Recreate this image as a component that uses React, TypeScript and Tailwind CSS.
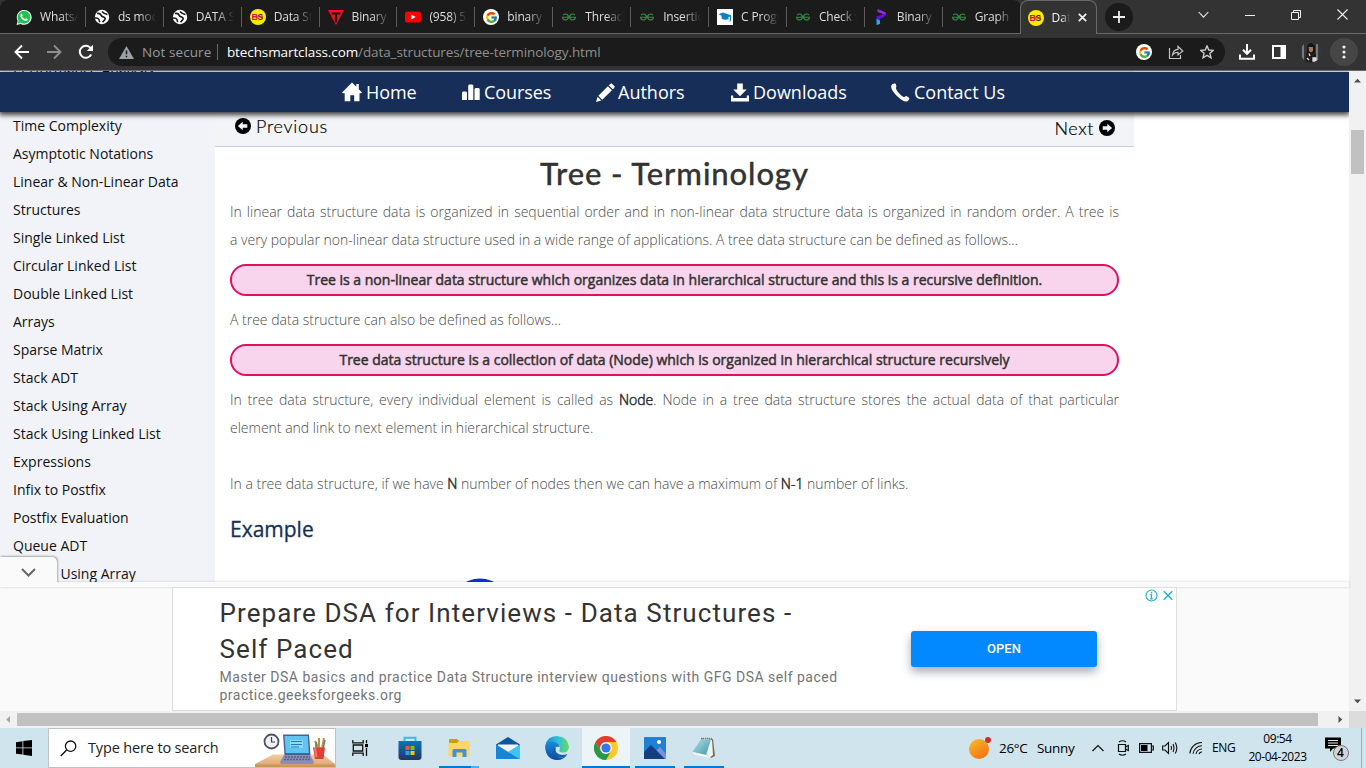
import React from "react";
import { FcGoogle } from "react-icons/fc";
import { SiGeeksforgeeks } from "react-icons/si";
import { FaWhatsapp } from "react-icons/fa";

const GlobeIcon = () => (
  <svg width="16" height="16" viewBox="0 0 16 16">
    <circle cx="8" cy="8" r="7.2" fill="#fff" />
    <path d="M3 4.5 Q6 4 7 6 Q7.5 8 10 8.2 Q12 9 10.5 11 L8.5 13.2" fill="none" stroke="#1b1b1b" strokeWidth="1.7" />
    <path d="M8 2.5 Q10 5 13.5 5.5 M1 9 Q4 8.5 5 10.5 Q5 12 6 13" fill="none" stroke="#1b1b1b" strokeWidth="1.5" />
  </svg>
);

const BsIcon = () => (
  <svg width="16" height="16" viewBox="0 0 16 16">
    <circle cx="8" cy="8" r="8" fill="#ffea00" />
    <text x="1.6" y="11.2" fontSize="9" fontWeight="800" fontFamily="Liberation Sans, sans-serif" fill="#e0104c">B</text>
    <text x="7.6" y="11" fontSize="8.5" fontWeight="800" fontFamily="Liberation Sans, sans-serif" fill="#3a2a20">S</text>
    <path d="M2 7.9H13" stroke="#e0104c" strokeWidth="1" />
  </svg>
);

const WhatsIcon = () => (
  <svg width="17" height="17" viewBox="0 0 17 17">
    <path d="M.6 16.4 1.8 12.2A7.9 7.9 0 1 1 5 15.3Z" fill="#fff" />
    <path d="M1.9 15.1 2.8 12A6.8 6.8 0 1 1 5.2 14.2Z" fill="#1fc151" />
    <path d="M5.3 4.6 6.3 4.5 7.2 6.5 6.5 7.5Q7.5 9.5 9.6 10.3L10.5 9.3 12.6 10.3Q12.4 12.3 10.3 12.2 5.8 11.3 4.7 7.2 4.4 5.5 5.3 4.6Z" fill="#fff" />
  </svg>
);

const TIcon = () => (
  <svg width="16" height="16" viewBox="0 0 16 16">
    <path d="M0 1H16L8 16Z" fill="#f3121d" />
    <path d="M3.6 3.4H12.4V5.6H9.2V12L8 14 6.8 12V5.6H3.6Z" fill="#1b1b1b" />
  </svg>
);

const YouTubeIcon = () => (
  <svg width="16" height="16" viewBox="0 0 16 16">
    <rect y="2.4" width="16" height="11.2" rx="2.6" fill="#ff0000" />
    <path d="M6.3 5.5V10.5L10.6 8Z" fill="#fff" />
  </svg>
);

const GoogleIcon = () => (
  <span className="flex size-4 items-center justify-center rounded-full bg-white">
    <FcGoogle size={13} />
  </span>
);

const GfgIcon = () => <SiGeeksforgeeks size={14} color="#2f8d46" />;

const CapIcon = () => (
  <svg width="16" height="16" viewBox="0 0 16 16">
    <rect width="16" height="16" fill="#fff" />
    <path d="M1.5 5.2 6 3.4 14 6.2V11.5L12.8 13V7.6L11.5 8V10.2Q7.5 11.4 4.6 9.4V6.8Z" fill="#0c80c0" />
  </svg>
);

const PIcon = () => (
  <svg width="14" height="16" viewBox="0 0 14 16">
    <path d="M3.5 0 11.5 3.2Q13 5 11 6.8L7.5 9V6L9 5 3.5 3Z" fill="#a020f0" />
    <path d="M11.5 4.2Q12 7 8.5 8.6L5.8 9.8V13L2.5 11V7.5L7.5 6Z" fill="#5b14e0" />
    <path d="M2.5 10 6 11.5V15L2.5 16Z" fill="#2aa5f2" />
  </svg>
);

const tabs: [React.FC, string][] = [
  [WhatsIcon, "WhatsApp"],
  [GlobeIcon, "ds module"],
  [GlobeIcon, "DATA STR"],
  [BsIcon, "Data Struct"],
  [TIcon, "Binary Se"],
  [YouTubeIcon, "(958) 5.1"],
  [GoogleIcon, "binary tre"],
  [GfgIcon, "Threaded"],
  [GfgIcon, "Insertion"],
  [CapIcon, "C Program"],
  [GfgIcon, "Check wh"],
  [PIcon, "Binary Se"],
  [GfgIcon, "Graph Re"],
];

const TabStrip = () => (
  <div className="flex h-[33px] bg-[#333333]">
    <div className="flex h-[33px] rounded-t-lg bg-[#1b1b1b] pl-2">
      {tabs.map(([Icon, label], i) => (
        <div key={i} className="flex h-[33px] w-[77.9px] items-center">
          <div className="flex h-full w-[77px] items-center overflow-hidden pt-px pl-2">
            <span className="flex w-4 shrink-0 justify-center"><Icon /></span>
            <span className="ml-2 w-[38px] overflow-hidden whitespace-nowrap text-[12px] tracking-[-0.15px] text-[#dedede] [mask-image:linear-gradient(to_right,#000_55%,transparent)]">
              {label}
            </span>
          </div>
          <div className={i === 12 ? "hidden" : "h-5 w-px bg-[#5c5c5c]"} />
        </div>
      ))}
    </div>
    <div className="z-10 -ml-px flex h-[34px] w-[77px] items-center rounded-t-lg border border-b-0 border-[#6a6a6a] bg-[#333333] pl-[7px]">
      <BsIcon />
      <span className="ml-2 w-[18px] overflow-hidden whitespace-nowrap text-[12px] text-[#f0f0f0] [mask-image:linear-gradient(to_right,#000_55%,transparent)]">Data</span>
      <svg className="ml-2" width="9" height="9" viewBox="0 0 9 9"><path d="M.8.8 8.2 8.2M8.2.8.8 8.2" stroke="#eee" strokeWidth="1.8" /></svg>
    </div>
    <div className="mt-[3px] ml-2 flex size-7 items-center justify-center rounded-full bg-[#1b1b1b]">
      <svg width="12" height="12" viewBox="0 0 12 12"><path d="M6 0V12M0 6H12" stroke="#eee" strokeWidth="1.8" /></svg>
    </div>
    <div className="ml-auto flex h-[29px] items-center pr-[18px] text-[#eee]">
      <svg className="mr-9" width="11" height="8" viewBox="0 0 11 8"><path d="M.7 1 5.5 6.2 10.3 1" fill="none" stroke="currentColor" strokeWidth="1.1" /></svg>
      <svg className="mr-9" width="10" height="10" viewBox="0 0 10 10"><path d="M0 5.5H10" stroke="currentColor" /></svg>
      <svg className="mr-9" width="10" height="10" viewBox="0 0 10 10"><path d="M.5 2.5H7.5V9.5H.5ZM2.5 2.5V.5H9.5V7.5H7.5" fill="none" stroke="currentColor" /></svg>
      <svg width="11" height="11" viewBox="0 0 11 11"><path d="M.5.5 10.5 10.5M10.5.5.5 10.5" stroke="currentColor" strokeWidth="1.1" /></svg>
    </div>
  </div>
);

const Toolbar = () => (
  <div className="flex h-[38px] items-center border-t border-b border-[#696969] bg-[#333333] pr-2 pl-[14px]">
    <svg width="16" height="16" viewBox="0 0 16 16"><path d="M15 8H2M8 1.5 1.5 8 8 14.5" fill="none" stroke="#fff" strokeWidth="1.9" /></svg>
    <svg className="ml-4" width="16" height="16" viewBox="0 0 16 16"><path d="M1 8H14M8 1.5 14.5 8 8 14.5" fill="none" stroke="#8d8d8d" strokeWidth="1.9" /></svg>
    <svg className="ml-4" width="16" height="16" viewBox="0 0 16 16"><path d="M13.2 10.5A6 6 0 1 1 12.6 4.2" fill="none" stroke="#fff" strokeWidth="2" /><path d="M15 .8V7H8.8Z" fill="#fff" /></svg>
    <div className="ml-[14px] flex h-7 w-[1118px] items-center rounded-full bg-[#1b1b1b] pl-[11px]">
      <svg width="15" height="13" viewBox="0 0 15 13"><path d="M7.5 0 15 13H0Z" fill="#9aa0a6" /><path d="M7.5 4.6V8.3M7.5 9.7V11.3" stroke="#1b1b1b" strokeWidth="1.5" /></svg>
      <span className="ml-2 w-[67px] whitespace-nowrap text-[13.5px] tracking-[0.1px] text-[#959a9f]">Not secure</span>
      <span className="ml-2 h-4 w-px bg-[#6a6a6a]" />
      <span className="ml-[9px] whitespace-nowrap text-[13.5px] tracking-[-0.1px] text-[#8f8f8f]"><span className="text-white">btechsmartclass.com</span>/data_structures/tree-terminology.html</span>
      <span className="mr-4 ml-auto"><GoogleIcon /></span>
      <svg className="mr-4" width="16" height="16" viewBox="0 0 16 16"><path d="M1.5 4V14.5H12.5V11M4.5 11Q5 5.8 10 5.3V2.5L14.8 7 10 11V8.3Q6.5 8.2 4.5 11Z" fill="none" stroke="#c4c4c4" strokeWidth="1.2" /></svg>
      <svg className="mr-[11px]" width="14" height="14" viewBox="0 0 14 14"><path d="M7 .9 8.8 5 13.3 5.4 9.9 8.3 11 12.8 7 10.4 3 12.8 4.1 8.3.7 5.4 5.2 5Z" fill="none" stroke="#c9c9c9" strokeWidth="1.4" /></svg>
    </div>
    <svg className="ml-[14px]" width="16" height="16" viewBox="0 0 16 16"><path d="M8 0V9M4 5.8 8 9.8 12 5.8M1 10.5V14.8H15V10.5" fill="none" stroke="#fff" strokeWidth="2" /></svg>
    <svg className="ml-[17px]" width="14" height="14" viewBox="0 0 14 14"><path d="M1 1H13V13H1Z" fill="none" stroke="#fff" strokeWidth="2" /><path d="M8.5 1H13V13H8.5Z" fill="#fff" /></svg>
    <svg className="ml-[14px]" width="22" height="22" viewBox="0 0 22 22">
      <clipPath id="face"><circle cx="11" cy="11" r="10.5" /></clipPath>
      <g clipPath="url(#face)">
        <rect width="22" height="22" fill="#33373b" />
        <path d="M3 2V19M17 3V20" stroke="#929ca3" strokeWidth="1.4" />
        <path d="M7 5Q11-1 15 5V12H7Z" fill="#171514" />
        <path d="M8.5 6H13V10L11 12 9 10Z" fill="#a8755c" />
        <path d="M6 12 11 11 16 13 16 22H5Z" fill="#201c1b" />
        <path d="M9 12.5 10 15M13 17H16V20H13ZM7 17 9 19" stroke="#ddd" strokeWidth="1.3" fill="#ddd" />
      </g>
    </svg>
    <div className="ml-2 flex size-7 shrink-0 items-center justify-center rounded-full bg-[#464646]">
      <svg width="4" height="14" viewBox="0 0 4 14" fill="#eee"><circle cx="2" cy="2" r="1.6" /><circle cx="2" cy="7" r="1.6" /><circle cx="2" cy="12" r="1.6" /></svg>
    </div>
  </div>
);

const topics = [
  "Performance Analysis", "Space Complexity", "Time Complexity", "Asymptotic Notations", "Linear & Non-Linear Data", "Structures",
  "Single Linked List", "Circular Linked List", "Double Linked List", "Arrays", "Sparse Matrix", "Stack ADT",
  "Stack Using Array", "Stack Using Linked List", "Expressions", "Infix to Postfix", "Postfix Evaluation", "Queue ADT", "Queue Using Array",
];

const SiteNav = () => (
  <nav className="absolute inset-x-0 top-px flex h-10 items-center bg-[#172f58] pl-[342px] text-[18px] leading-none whitespace-nowrap text-white shadow-[0_2px_5px_1px_rgba(0,0,0,0.75)]">
    <div className="flex w-[120px] items-center">
      <svg width="20" height="20" viewBox="0 0 20 20" fill="#fff"><path d="M10 .4 14.3 4.7V2H16.8V7.2L20 10.4 19.2 11.2H17.5V19.2H12.2V13.2H8.3V19.2H2.7V11.2H.8L0 10.4Z" /></svg>
      <span className="ml-1 tracking-[-0.1px]">Home</span>
    </div>
    <div className="flex w-[134px] items-center">
      <svg width="18" height="18" viewBox="0 0 18 18" fill="#fff"><path d="M0 9.5 1 8.5H4L5 9.5V17H0ZM6.2 2.5 7.2 1.5H10.3L11.3 2.5V17H6.2ZM12.5 6 13.5 5H16.7L17.7 6V17H12.5Z" /></svg>
      <span className="ml-1 tracking-[-0.1px]">Courses</span>
    </div>
    <div className="flex w-[135px] items-center">
      <svg width="19" height="19" viewBox="0 0 19 19" fill="#fff"><path d="M14 1.2 15.5.3 18.8 3.5 18 5.2 16.8 6.3 12.8 2.3ZM11.9 3.2 15.9 7.2 6.3 16.7 2.4 12.7ZM1.6 13.8 5.3 17.4 0 19Z" /></svg>
      <span className="ml-[3px]">Authors</span>
    </div>
    <div className="flex w-[160px] items-center">
      <svg width="18" height="19" viewBox="0 0 18 19" fill="#fff"><path d="M6.2.5H11.8V6.5H15.7L9 13.2 2.3 6.5H6.2ZM0 12.5H2.2V15H15.8V12.5H18V18.5H0Z" /></svg>
      <span className="ml-1">Downloads</span>
    </div>
    <div className="flex items-center">
      <svg width="19" height="19" viewBox="0 0 19 19" fill="#fff"><path d="M1.2 1.2 4 .3Q5 .7 5.4 3.4L4.8 5.2Q5.5 7.5 8 10.2 10.5 13 13 14.3L15 13.1Q17.7 14 18.5 15.5L17 18Q13.5 20 6.5 13.5-.8 6.2.3 2.7Z" /></svg>
      <span className="ml-1">Contact Us</span>
    </div>
  </nav>
);

const Arrow = ({ left = false }: { left?: boolean }) => (
  <svg className={left ? "" : "rotate-180"} width="16" height="16" viewBox="0 0 16 16">
    <circle cx="8" cy="8" r="8" />
    <path d="M2.9 8 7.7 3.8V6.3H12.3V9.7H7.7V12.2Z" fill="#f2f4f6" />
  </svg>
);

const B = ({ children }: { children: React.ReactNode }) => (
  <span className="text-[#333] [-webkit-text-stroke:0.5px_#333]">{children}</span>
);

const Definition = ({ children }: { children: React.ReactNode }) => (
  <div className="flex h-8 items-center justify-center rounded-2xl border-2 border-[#e0105c] bg-[#f9d5ed] whitespace-nowrap">{children}</div>
);

const Article = () => (
  <main className="h-full w-[919px] text-[14px] leading-7 text-[#4c4c4c]">
    <div className="flex h-[76px] items-end justify-between border-b border-[#c9cbd9] bg-[#f3f4f7] px-[15px] font-['Lato'] text-[18px] text-black">
      <div className="mb-[6px] ml-[5px] flex items-center gap-[5px]"><Arrow left /><span className="font-light tracking-[0.75px] [-webkit-text-stroke:0.2px_black]">Previous</span></div>
      <div className="mr-1 mb-1 flex items-center gap-[5px]"><span className="font-light tracking-[0.6px] [-webkit-text-stroke:0.2px_black]">Next</span><Arrow /></div>
    </div>
    <div className="flex flex-col px-[15px] whitespace-nowrap">
      <h1 className="flex h-[51px] items-center justify-center font-['Lato'] text-[31px] font-medium tracking-[0.9px] text-[#333] [-webkit-text-stroke:0.3px_#333]">Tree - Terminology</h1>
      <p className="[text-align-last:justify] font-light">In linear data structure data is organized in sequential order and in non-linear data structure data is organized in random order. A tree is</p>
      <p className="mb-[10px] font-light">a very popular non-linear data structure used in a wide range of applications. A tree data structure can be defined as follows...</p>
      <Definition><B>Tree is a non-linear data structure which organizes data in hierarchical structure and this is a recursive definition.</B></Definition>
      <p className="my-[10px] font-light">A tree data structure can also be defined as follows...</p>
      <Definition><B>Tree data structure is a collection of data (Node) which is organized in hierarchical structure recursively</B></Definition>
      <p className="mt-[10px] [text-align-last:justify] font-light">In tree data structure, every individual element is called as <B>Node</B>. Node in a tree data structure stores the actual data of that particular</p>
      <p className="font-light">element and link to next element in hierarchical structure.</p>
      <p className="mt-7 font-light">In a tree data structure, if we have <B>N</B> number of nodes then we can have a maximum of <B>N-1</B> number of links.</p>
      <h2 className="mt-[17px] text-[21px] text-[#172f58] [-webkit-text-stroke:0.3px_#172f58]">Example</h2>
      <svg className="mt-[35px] ml-[220px] shrink-0" width="60" height="60" viewBox="0 0 60 60"><circle cx="30" cy="30" r="29.5" fill="#1230d0" /></svg>
    </div>
  </main>
);

const Ad = () => (
  <div className="relative flex h-[129px] flex-col bg-[#fafafa]">
    <div className="absolute -top-[25px] left-0 flex h-[26px] w-[57px] items-center justify-center rounded-tr-[5px] bg-[#fafafa] pb-0 shadow-[1px_-1px_2px_rgba(0,0,0,0.3)] [clip-path:inset(-3px_-3px_1px_0)]">
      <svg className="mt-1" width="15" height="9" viewBox="0 0 15 9"><path d="M1 1 7.5 7.5 14 1" fill="none" stroke="#666" strokeWidth="2" /></svg>
    </div>
    <div className="h-[5px] bg-[#fafafa] shadow-[0_0_3px_rgba(0,0,0,0.18)]" />
    <div className="ml-[172px] flex h-[124px] w-[1005px] border border-[#dedede] bg-white font-['Roboto']">
      <div className="w-[691px] pt-[7px] pl-[46.5px] whitespace-nowrap">
        <div className="text-[26px] leading-9 tracking-[1.08px] text-[#333]">Prepare DSA for Interviews - Data Structures -</div>
        <div className="text-[26px] leading-9 tracking-[1.08px] text-[#333]">Self Paced</div>
        <div className="mt-px text-[14px] leading-[18px] tracking-[0.5px] text-[#757575]">Master DSA basics and practice Data Structure interview questions with GFG DSA self paced</div>
        <div className="text-[14px] leading-[18px] tracking-[0.5px] text-[#757575]">practice.geeksforgeeks.org</div>
      </div>
      <div className="mt-[43px] ml-[47px] flex h-9 w-[186px] shrink-0 items-center justify-center rounded-[3px] bg-[#0288ff] text-[13px] font-medium text-white shadow-[0_5px_10px_rgba(40,50,75,0.4)]">OPEN</div>
      <div className="mt-px ml-auto flex gap-[5px] pr-[3px]">
        <svg width="13" height="13" viewBox="0 0 13 13"><circle cx="6.5" cy="6.5" r="5.5" fill="none" stroke="#19b2cf" strokeWidth="1.1" /><path d="M6.5 5.6V10M6.5 3V4.5M5.2 5.6H6.5M5.2 9.8H7.8" stroke="#19b2cf" strokeWidth="1.3" /></svg>
        <svg width="10" height="13" viewBox="0 0 10 13"><path d="M.7 2.2 9.3 10.8M9.3 2.2.7 10.8" stroke="#19b2cf" strokeWidth="1.4" /></svg>
      </div>
    </div>
  </div>
);

const WinLogo = () => (
  <svg width="16" height="16" viewBox="0 0 16 16"><path d="M0 2.3 6.5 1.3V7.5H0ZM7.3 1.1 16 0V7.5H7.3ZM0 8.3H6.5V14.6L0 13.7ZM7.3 8.3H16V16L7.3 14.8Z" /></svg>
);

const SearchArt = () => (
  <svg width="80" height="38" viewBox="0 0 80 38">
    <defs><linearGradient id="desk" x2="0" y2="1"><stop stopColor="#f0cda0" /><stop offset="1" stopColor="#d9a36b" /></linearGradient></defs>
    <path d="M18 25.5H68L80 35V38H0V35Z" fill="url(#desk)" />
    <path d="M0 35.5H80V38H0Z" fill="#c99562" />
    <circle cx="16.5" cy="12.5" r="7" fill="#f0f1f6" stroke="#50525f" strokeWidth="1.8" />
    <path d="M16.5 8V13H20" fill="none" stroke="#444" strokeWidth="1.2" />
    <path d="M28 5.5H54L55.5 26H29.5Z" fill="#44639b" />
    <path d="M29.5 7H52.8L53.8 24H30.8Z" fill="#63c4f2" />
    <path d="M35 11H48V19H35Z" fill="#8adcff" />
    <path d="M36 12.5H47M36 15.5H47M36 18H44" stroke="#2777bf" strokeWidth="1.2" />
    <path d="M29 26H55L59 33 58 35H26L25 33Z" fill="#8790b4" />
    <path d="M30 28H55M29 30.5H56" stroke="#565f88" strokeDasharray="2 1" strokeWidth="1.3" />
    <path d="M60 12 64 20M64 9V20M69 9 67 20M61 16 66 20" stroke="#c98e3a" strokeWidth="2" />
    <path d="M61 13V20M70 11 68 20" stroke="#448c78" strokeWidth="1.5" />
    <path d="M58 18.5H70L68.5 30H60Z" fill="#df4035" />
    <path d="M60 19 61.5 28" stroke="#f5796b" strokeWidth="2" />
  </svg>
);

const TaskView = () => (
  <svg width="17" height="16" viewBox="0 0 17 16"><path d="M.8 0V2.8H11.2V0M.8 16V13.2H11.2V16M1.3 5H10.7V11H1.3ZM14.5 0V3.2M14.5 8V16" fill="none" stroke="#111" strokeWidth="1.3" /><path d="M13 4H16V7.2H13Z" /></svg>
);

const Store = () => (
  <svg width="24" height="24" viewBox="0 0 24 24">
    <defs><linearGradient id="bag" x2="0" y2="1"><stop stopColor="#0675b9" /><stop offset="1" stopColor="#263660" /></linearGradient></defs>
    <path d="M6.5 7V1.8H17.5V7" fill="none" stroke="#32bdf0" strokeWidth="1.9" />
    <path d="M.5 5H23.5V21Q23.5 24 20.5 24H3.5Q.5 24 .5 21Z" fill="url(#bag)" />
    <path d="M7.5 10H11.5V14H7.5Z" fill="#f35426" /><path d="M12.5 10H16.5V14H12.5Z" fill="#83be20" /><path d="M7.5 15H11.5V19H7.5Z" fill="#20a6ed" /><path d="M12.5 15H16.5V19H12.5Z" fill="#ffbd14" />
  </svg>
);
const Folder = () => (
  <svg width="24" height="24" viewBox="0 0 24 24">
    <path d="M2 4Q2 3 3 3H10L12 5H21Q22 5 22 6V20H2Z" fill="#d8990f" /><path d="M2 7H10L12 5H21.5Q22.5 5 22.5 6V20.5H1.5V8Z" fill="#ffd666" />
    <path d="M5.5 21V14.5Q5.5 13 7 13H18Q19.5 13 19.5 14.5V21H15.5V16.5H9.5V21Z" fill="#3d95d8" />
  </svg>
);
const Mail = () => (
  <svg width="24" height="24" viewBox="0 0 24 24">
    <path d="M0 8.5 12 1 24 8.5V16H0Z" fill="#0a56a0" /><path d="M2 8.5H22V16H2Z" fill="#f2f4f7" />
    <path d="M0 8.5 12 16.5 24 8.5V23H0Z" fill="#31b3f0" /><path d="M0 8.5 24 23H0Z" fill="#1685d8" /><path d="M12 16 24 8.5V23Z" fill="#3fc3f5" />
  </svg>
);
const Edge = () => (
  <svg width="24" height="24" viewBox="0 0 24 24">
    <defs><linearGradient id="e1"><stop stopColor="#178bd6" /><stop offset=".55" stopColor="#32c1d4" /><stop offset="1" stopColor="#66dc5c" /></linearGradient>
    <linearGradient id="e2" x2="0" y2="1"><stop stopColor="#188cdc" /><stop offset="1" stopColor="#0b4a99" /></linearGradient></defs>
    <path d="M.2 10Q2 0 12 0 23 .8 24 11 23.5 16.5 18 16.5 14 16.3 14.2 14.5 16 12 13.5 9.3 7 4 .2 10Z" fill="url(#e1)" />
    <path d="M.1 11Q1 5.5 7.5 5.5 13.5 6 14.5 11 8 10 8.5 15.5 10 22.5 17.5 21.5 21 21 22.5 18 19 24 12 24 1 23.5.1 11Z" fill="url(#e2)" />
    <path d="M8.5 12.5Q6.5 18 11.5 21.5 19 23 22.5 18 16 20.5 12 17 9.8 15 11 11Z" fill="#0d5fb5" />
  </svg>
);
const Chrome = () => (
  <svg width="24" height="24" viewBox="0 0 24 24">
    <circle cx="12" cy="12" r="12" fill="#ffca28" />
    <path d="M12 12 6.8 15 1.6 6A12 12 0 0 1 22.4 6H12Z" fill="#e23d31" />
    <path d="M12 12 6.8 15 1.6 6A12 12 0 0 0 12 24L17.2 15Z" fill="#279a4b" />
    <circle cx="12" cy="12" r="5.9" fill="#fff" /><circle cx="12" cy="12" r="4.6" fill="#3278e8" />
  </svg>
);
const Photos = () => (
  <svg width="22" height="22" viewBox="0 0 22 22">
    <rect width="22" height="22" rx="1" fill="#2180d3" /><path d="M11 15 16 10 22 17V22H11Z" fill="#7e91e0" /><path d="M0 15 7 8 21 22H0Z" fill="#153e7f" /><circle cx="15" cy="5" r="2" fill="#fff" />
  </svg>
);
const Notepad = () => (
  <svg width="24" height="24" viewBox="0 0 24 24">
    <path d="M10 2 21 3 23 20 19 22 17 19Z" fill="#7e6c50" /><path d="M11 2 20 4 21 19 17 22Z" fill="#eef3f3" />
    <defs><linearGradient id="np" x2="1" y2="1"><stop stopColor="#b6dfe5" /><stop offset="1" stopColor="#3c99aa" /></linearGradient></defs>
    <path d="M9 3 19 3.5 14 19 .5 16Z" fill="url(#np)" /><path d="M.5 16 14 19 17 22 2 18Z" fill="#f7fafa" /><path d="M9 2.5H20" stroke="#777" strokeWidth="1.5" strokeDasharray="1 1" />
  </svg>
);

const apps: { I: React.FC; bar: string; box: string }[] = [
  { I: Store, bar: "", box: "w-12" },
  { I: Folder, bar: "explorer", box: "w-12" },
  { I: Mail, bar: "", box: "w-12" },
  { I: Edge, bar: "", box: "w-12" },
  { I: Chrome, bar: "full", box: "w-12 bg-[#edf4f8]" },
  { I: Photos, bar: "short", box: "w-12" },
  { I: Notepad, bar: "short", box: "w-12" },
];

const Taskbar = () => (
  <div className="flex h-10 bg-[#cfe4ec] text-black">
    <div className="flex w-12 items-center justify-center"><WinLogo /></div>
    <div className="flex h-10 w-[288px] items-center border border-[#bfc3c5] bg-white pl-[11px]">
      <svg width="17" height="17" viewBox="0 0 17 17"><circle cx="10.6" cy="6.2" r="5.2" fill="none" stroke="#111" strokeWidth="1.3" /><path d="M6.8 9.8 .8 16" stroke="#111" strokeWidth="1.4" /></svg>
      <span className="ml-[11px] text-[14.5px] tracking-[-0.15px] whitespace-nowrap text-[#222]">Type here to search</span>
      <span className="ml-auto"><SearchArt /></span>
    </div>
    <div className="mr-[2px] flex w-12 items-center justify-center"><TaskView /></div>
    <div className="flex gap-px">
      {apps.map(({ I, bar, box }, i) => (
        <div key={i} className={"flex h-10 shrink-0 flex-col " + box}>
          <div className="flex h-[38px] items-center justify-center pt-[2px]"><I /></div>
          {bar === "full" && <div className="h-[2px] bg-[#0078d7]" />}
          {bar === "short" && <div className="mx-1 h-[2px] bg-[#0078d7]" />}
          {bar === "explorer" && <div className="mx-1 flex h-[2px]"><div className="w-8 bg-[#0078d7]" /><div className="w-2 bg-[#5ea9e5]" /></div>}
        </div>
      ))}
    </div>
    <div className="ml-auto flex items-center text-[12px] whitespace-nowrap">
      <svg width="23" height="24" viewBox="0 0 23 24"><defs><linearGradient id="sun" x2=".6" y2="1"><stop stopColor="#f9be2d" /><stop offset="1" stopColor="#f47412" /></linearGradient></defs><circle cx="10" cy="13" r="10" fill="url(#sun)" /><circle cx="19" cy="4" r="3" fill="#d22c26" /></svg>
      <span className="ml-[7px] w-[30px] text-[13.5px] tracking-[-0.3px]">26°C</span>
      <span className="ml-2 w-[55px] text-[13.5px] tracking-[-0.3px]">Sunny</span>
      <svg width="12" height="8" viewBox="0 0 12 8"><path d="M.5 7 6 1.5 11.5 7" fill="none" stroke="#111" strokeWidth="1.2" /></svg>
      <svg className="ml-[13px]" width="12" height="18" viewBox="0 0 12 18"><path d="M1.5 5.5H8.5V12.5H1.5ZM8.5 8 11.3 6.5V11.5L8.5 10M2 3Q5.5.5 9 3M2 15Q5.5 17.5 9 15" fill="none" stroke="#111" strokeWidth="1.2" /></svg>
      <svg className="ml-[10px]" width="15" height="10" viewBox="0 0 15 10"><path d="M.6.6H12.4V9.4H.6ZM12.4 3H14.3V7H12.4" fill="none" stroke="#111" strokeWidth="1.2" /><path d="M2 2H8.5V8H2Z" /></svg>
      <svg className="ml-2" width="16" height="14" viewBox="0 0 16 14"><path d="M.6 5H3L6.5 1.5V12.5L3 9H.6ZM9 5Q10 7 9 9M11 3Q13 7 11 11M13.2 1.5Q16.5 7 13.2 12.5" fill="none" stroke="#111" strokeWidth="1.1" /></svg>
      <svg className="ml-[11px]" width="14" height="14" viewBox="0 0 14 14"><path d="M.8 12.5A12 12 0 0 1 13 1.5M4 12.8A9 9 0 0 1 13 4.8M7 13A6 6 0 0 1 13 8M10 13A3 3 0 0 1 13 11" fill="none" stroke="#111" strokeWidth="1.1" /></svg>
      <span className="ml-[9px] w-[25px] tracking-[-0.4px]">ENG</span>
      <div className="ml-[10px] flex w-[61px] flex-col items-center leading-[18px] tracking-[-0.45px]"><span>09:54</span><span>20-04-2023</span></div>
      <div className="relative ml-[17px] h-6 w-6"><svg width="24" height="25" viewBox="0 0 24 25"><path d="M0 1.5H16V12.5H8L5 16V12.5H0Z" /><path d="M3 4.5H13M3 7H13M3 9.5H13" stroke="#dceaf0" /><circle cx="16" cy="17" r="7.5" fill="#d5d5d5" stroke="#777" /></svg><span className="absolute top-[8px] left-3 text-[12px] leading-[18px] font-semibold">4</span></div>
      <div className="mr-1 ml-3 h-10 w-px bg-[#9aacb4]" />
    </div>
  </div>
);

export default function App() {
  return (
    <div className="flex h-[768px] w-[1366px] flex-col overflow-hidden bg-white font-['Open_Sans','Noto_Sans',sans-serif]">
      <TabStrip />
      <Toolbar />
      <div className="flex h-[640px]">
        <div className="flex w-[1349px] flex-col">
          <div className="relative flex h-[511px] overflow-hidden">
            <aside className="w-[215px] shrink-0 bg-[#f1f3f8] pl-[13px] text-[14px] leading-7 text-[#111]">
              <div className="-mt-[15px] flex flex-col whitespace-nowrap">{topics.map((t) => <span key={t}>{t}</span>)}</div>
            </aside>
            <Article />
            <SiteNav />
          </div>
          <Ad />
        </div>
        <div className="flex w-[17px] flex-col items-center bg-[#f1f1f1]">
          <svg className="mt-[5px]" width="9" height="8" viewBox="0 0 9 8"><path d="M1 6.5 4.5 2.8 8 6.5Z" fill="#505050" /></svg>
          <div className="mt-[46px] h-11 w-[13px] bg-[#c1c1c1]" />
          <svg className="mt-auto mb-[5px]" width="9" height="8" viewBox="0 0 9 8"><path d="M1 1.5 4.5 5.2 8 1.5Z" fill="#505050" /></svg>
        </div>
      </div>
      <div className="flex h-[17px] items-center bg-[#f1f1f1]">
        <svg className="mx-1" width="9" height="9" viewBox="0 0 9 9"><path d="M6 1 2.3 4.5 6 8Z" fill="#a3a3a3" /></svg>
        <div className="h-[13px] w-[1301px] bg-[#c1c1c1]" />
        <svg className="ml-[18px]" width="9" height="9" viewBox="0 0 9 9"><path d="M2.5 1 6.2 4.5 2.5 8Z" fill="#505050" /></svg>
        <div className="ml-auto h-full w-[17px] bg-[#dcdcdc]" />
      </div>
      <Taskbar />
    </div>
  );
}
